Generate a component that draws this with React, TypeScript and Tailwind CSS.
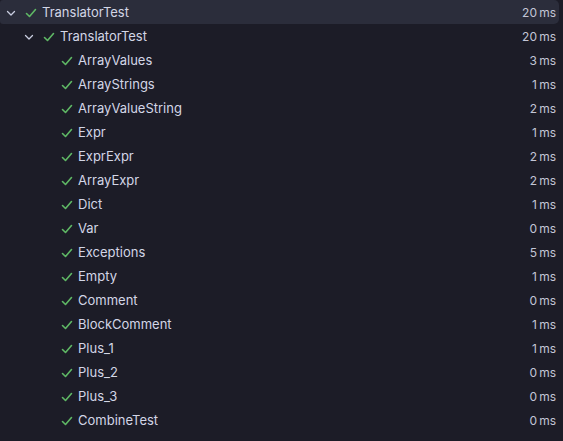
import React from 'react';

type Row = { name: string; ms: number; level: number; expandable?: boolean; selected?: boolean };

const rows: Row[] = [
  { name: 'TranslatorTest', ms: 20, level: 0, expandable: true, selected: true },
  { name: 'TranslatorTest', ms: 20, level: 1, expandable: true },
  { name: 'ArrayValues', ms: 3, level: 2 },
  { name: 'ArrayStrings', ms: 1, level: 2 },
  { name: 'ArrayValueString', ms: 2, level: 2 },
  { name: 'Expr', ms: 1, level: 2 },
  { name: 'ExprExpr', ms: 2, level: 2 },
  { name: 'ArrayExpr', ms: 2, level: 2 },
  { name: 'Dict', ms: 1, level: 2 },
  { name: 'Var', ms: 0, level: 2 },
  { name: 'Exceptions', ms: 5, level: 2 },
  { name: 'Empty', ms: 1, level: 2 },
  { name: 'Comment', ms: 0, level: 2 },
  { name: 'BlockComment', ms: 1, level: 2 },
  { name: 'Plus_1', ms: 1, level: 2 },
  { name: 'Plus_2', ms: 0, level: 2 },
  { name: 'Plus_3', ms: 0, level: 2 },
  { name: 'CombineTest', ms: 0, level: 2 },
];

const Chevron = () => (
  <svg width="10" height="10" viewBox="0 0 10 10" fill="none">
    <path d="M1.5 3.5 L5 7 L8.5 3.5" stroke="#c9cde0" strokeWidth="1.3" strokeLinecap="round" strokeLinejoin="round" />
  </svg>
);

const Check = () => (
  <svg width="12" height="12" viewBox="0 0 12 12" fill="none">
    <path d="M1.5 6.5 L4.5 9.5 L10.5 2.5" stroke="#5fb865" strokeWidth="1.6" strokeLinecap="round" strokeLinejoin="round" />
  </svg>
);

const indents = ['pl-[6px]', 'pl-[24px]', 'pl-[42px]'];

export default function App() {
  return (
    <div className="w-[563px] h-[441px] bg-[#1c1c27] font-['Inter',sans-serif] text-[13px] text-[#d3d6e6] overflow-hidden">
      {rows.map((r, i) => (
        <div
          key={i}
          className={
            'flex items-center h-[24px] w-[559px] pr-[3px] pt-px rounded-r-[5px] ' +
            indents[r.level] +
            (r.selected ? ' bg-[#2b2d3b] rounded-l-[3px]' : '')
          }
        >
          <span className="w-[19px] flex items-center">{r.expandable ? <Chevron /> : null}</span>
          <span className="w-[18px] flex items-center"><Check /></span>
          <span className="flex-1 truncate -ml-px">{r.name}</span>
          <span className="text-[12px] text-[#c3c6d6]">{r.ms}{'\u2009'}ms</span>
        </div>
      ))}
    </div>
  );
}
